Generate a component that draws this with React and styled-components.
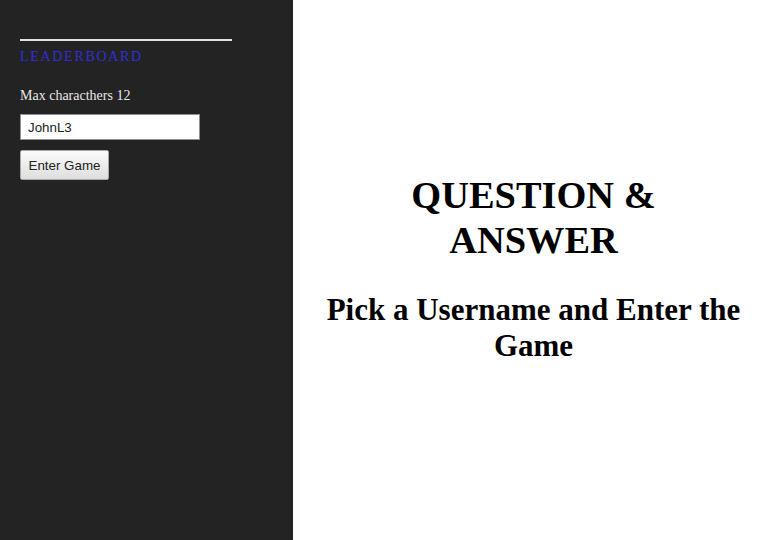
import React from "react";
import styled, { createGlobalStyle } from "styled-components";

const Global = createGlobalStyle`
  html, body { margin: 0; padding: 0; height: 100%; }
  body { font-family: "Liberation Serif", "Times New Roman", serif; background: #fff; }
  #root { height: 100%; }
`;

const Layout = styled.div`
  display: flex;
  width: 774px;
  height: 540px;
`;

const Sidebar = styled.aside`
  width: 293px;
  flex: none;
  background: #232323;
  padding: 39px 20px 0 20px;
  box-sizing: border-box;
  display: flex;
  flex-direction: column;
  align-items: flex-start;
`;

const Rule = styled.div`
  width: 212px;
  height: 2px;
  background: #e2e2e2;
`;

const Heading = styled.div`
  margin-top: 8px;
  font-size: 14px;
  letter-spacing: 1.7px;
  color: #2f2fd6;
  line-height: 16px;
`;

const Hint = styled.div`
  margin-top: 23px;
  font-size: 14px;
  color: #e8e8e8;
  line-height: 16px;
`;

const NameInput = styled.input`
  margin-top: 10px;
  width: 180px;
  height: 26px;
  box-sizing: border-box;
  border: 1px solid #8f8f8f;
  background: #fff;
  padding: 0 7px;
  font-family: "Liberation Sans", Arial, sans-serif;
  font-size: 13.33px;
  color: #222;
  outline: none;
`;

const EnterButton = styled.button`
  margin-top: 10px;
  width: 89px;
  height: 30px;
  box-sizing: border-box;
  border: 1px solid #a8a8a8;
  border-radius: 2px;
  background: linear-gradient(#fbfbfb, #dedede);
  font-family: "Liberation Sans", Arial, sans-serif;
  font-size: 13.33px;
  color: #222;
  padding: 0;
`;

const Main = styled.main`
  flex: 1;
  display: flex;
  align-items: center;
  justify-content: center;
  background: #fff;
`;

const Content = styled.div`
  width: 418px;
  padding-bottom: 3px;
  text-align: center;
  color: #000;
`;

const Title = styled.h1`
  margin: 0;
  font-size: 38.4px;
  font-weight: bold;
  line-height: 45px;
`;

const Subtitle = styled.h2`
  margin: 29px 0 0 0;
  font-size: 31px;
  font-weight: bold;
  line-height: 36px;
`;

export default function App() {
  return (
    <>
      <Global />
      <Layout>
        <Sidebar>
          <Rule />
          <Heading>LEADERBOARD</Heading>
          <Hint>Max characthers 12</Hint>
          <NameInput defaultValue="JohnL3" maxLength={12} />
          <EnterButton>Enter Game</EnterButton>
        </Sidebar>
        <Main>
          <Content>
            <Title>QUESTION &amp; ANSWER</Title>
            <Subtitle>Pick a Username and Enter the Game</Subtitle>
          </Content>
        </Main>
      </Layout>
    </>
  );
}
